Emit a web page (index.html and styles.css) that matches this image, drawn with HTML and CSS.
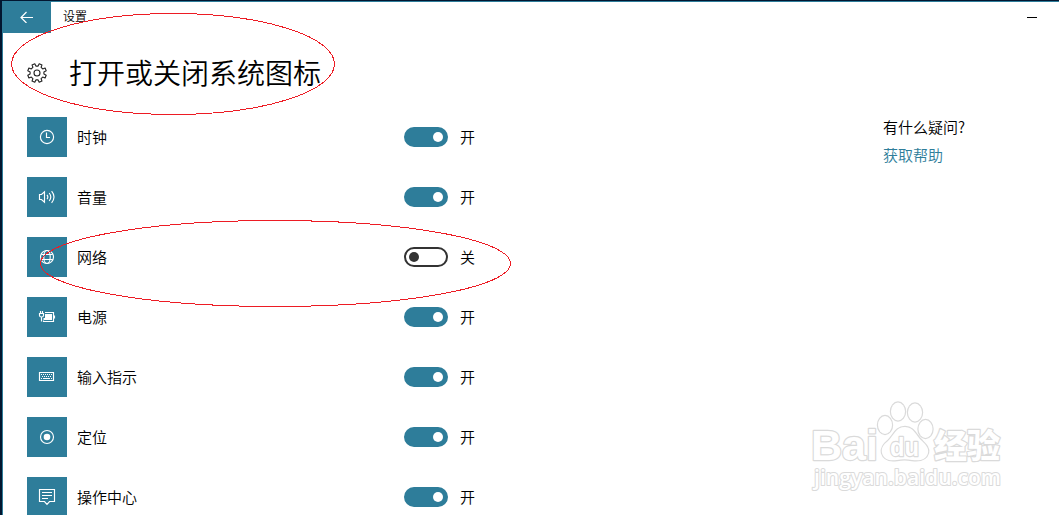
FILE: index.html
```html
<!DOCTYPE html>
<html lang="zh-CN">
<head>
  <meta charset="UTF-8">
  <title>设置</title>
  <link rel="stylesheet" href="styles.css">
</head>
<body>
  <div class="window">
    <header class="titlebar">
      <button class="back" aria-label="返回">
        <svg width="14" height="12" viewBox="0 0 14 12"><path d="M13 6.500H1.500M6.500 1L1 6.500l5.500 5.500"/></svg>
      </button>
      <span class="title">设置</span>
      <button class="minimize" aria-label="最小化"></button>
    </header>

    <div class="heading">
      <svg class="gear" width="20" height="20" viewBox="-10 -10 20 20">
        <path d="M6.9-1.1V1.1L9.2 2.2 8.1 5 5.7 4.1 4.1 5.7 5 8.1 2.2 9.2 1.1 6.9H-1.1L-2.2 9.2-5 8.1-4.1 5.7-5.7 4.1-8.1 5-9.2 2.2-6.9 1.1V-1.1L-9.2-2.2-8.1-5-5.7-4.1-4.1-5.7-5-8.1-2.2-9.2-1.1-6.9H1.1L2.2-9.2 5-8.1 4.1-5.7 5.7-4.1 8.1-5 9.2-2.2z"/>
        <circle r="3"/>
      </svg>
      <h1>打开或关闭系统图标</h1>
    </div>

    <main class="content">
      <ul class="settings">
        <li class="row">
          <span class="icon"><svg width="20" height="20" viewBox="0 0 20 20"><circle cx="10" cy="10" r="6.6"/><path d="M9.5 5.5v5h3.5"/></svg></span>
          <span class="name">时钟</span>
          <span class="toggle on"></span>
          <span class="state">开</span>
        </li>
        <li class="row">
          <span class="icon"><svg width="20" height="20" viewBox="0 0 20 20"><path d="M2.5 7.5h2l3-2.7v10.4l-3-2.7h-2zM10 7.8q1.7 2.2 0 4.4M12.2 6q3.2 4 0 8M14.6 4.2q4.8 5.8 0 11.6"/></svg></span>
          <span class="name">音量</span>
          <span class="toggle on"></span>
          <span class="state">开</span>
        </li>
        <li class="row">
          <span class="icon"><svg width="20" height="20" viewBox="0 0 20 20"><circle cx="10" cy="10" r="6.5"/><ellipse cx="10" cy="10" rx="3.2" ry="6.5"/><path d="M4.3 7.5h11.4M4.3 12.5h11.4"/></svg></span>
          <span class="name">网络</span>
          <span class="toggle"></span>
          <span class="state">关</span>
        </li>
        <li class="row">
          <span class="icon"><svg width="20" height="20" viewBox="0 0 20 20"><path d="M3.5 4v2.500M5.500 4v2.500M2.500 6.500h4v2q0 1.500-2 1.500t-2-1.500zM4.500 10v4.500M8 5.500h8.500v9h-10v-1M17.500 8.500v3"/><path class="solid" d="M8 7h7v6H6.500v-2H8z"/></svg></span>
          <span class="name">电源</span>
          <span class="toggle on"></span>
          <span class="state">开</span>
        </li>
        <li class="row">
          <span class="icon"><svg width="20" height="20" viewBox="0 0 20 20"><path d="M2.500 5.500h14v8h-14z"/><path d="M4 7.500h11M5 9.500h10" stroke-dasharray="1 1"/><path d="M4 11.500h1M6 11.500h7M14 11.500h1"/></svg></span>
          <span class="name">输入指示</span>
          <span class="toggle on"></span>
          <span class="state">开</span>
        </li>
        <li class="row">
          <span class="icon"><svg width="20" height="20" viewBox="0 0 20 20"><circle cx="10" cy="10" r="6.500"/><circle class="solid" cx="10" cy="10" r="3.300"/></svg></span>
          <span class="name">定位</span>
          <span class="toggle on"></span>
          <span class="state">开</span>
        </li>
        <li class="row">
          <span class="icon"><svg width="20" height="20" viewBox="0 0 20 20"><path d="M2.500 2.500h15v12h-5l-2.500 2.800-2.500-2.800h-5zM5 5.500h10M5 8.500h10M5 11.500h6"/></svg></span>
          <span class="name">操作中心</span>
          <span class="toggle on"></span>
          <span class="state">开</span>
        </li>
      </ul>

      <aside class="help">
        <p>有什么疑问?</p>
        <a href="#">获取帮助</a>
      </aside>
    </main>
  </div>

  <svg class="marks" width="520" height="320" viewBox="0 0 520 320">
    <ellipse cx="173" cy="64" rx="161.500" ry="50.500"/>
    <ellipse cx="275.500" cy="263.500" rx="235" ry="43"/>
  </svg>

  <svg class="watermark" width="210" height="110" viewBox="800 390 210 110">
    <text class="latin" x="811" y="460" font-size="42" textLength="67" lengthAdjust="spacingAndGlyphs">Bai</text>
    <ellipse cx="885" cy="425" rx="7" ry="9"/>
    <ellipse cx="898" cy="411.500" rx="7" ry="9"/>
    <ellipse cx="915" cy="412.500" rx="7" ry="9"/>
    <ellipse cx="925.500" cy="429" rx="7" ry="9"/>
    <path d="M905 427c-9 0-11 8-17 14-5 4-7 7-6 12 2 7 8 8 15 7 5-1 10-1 15 0 8 1 14 0 16-7 1-5-2-8-6-12-6-5-8-14-17-14z"/>
    <text class="latin" x="890" y="456" font-size="25" textLength="29" lengthAdjust="spacingAndGlyphs">du</text>
    <text class="cjk" x="934" y="458" font-size="33">经验</text>
    <text class="url" x="814" y="485" font-size="21" textLength="187" lengthAdjust="spacingAndGlyphs">jingyan.baidu.com</text>
  </svg>
</body>
</html>
```
FILE: styles.css
```css
* {
  box-sizing: border-box;
}

body {
  margin: 0;
  height: 515px;
  overflow: hidden;
  padding: 1px 0 0 2px;
  background: #021630;
  color: #000;
  font-family: "Noto Sans CJK SC", sans-serif;
  font-weight: 350;
  font-size: 15px;
}

.window {
  height: 514px;
  overflow: hidden;
  background: #fff;
  border-top: 1px solid #2e7d9a;
  border-left: 1px solid #2e7d9a;
}

.titlebar {
  display: flex;
  height: 31px;
}

.back {
  display: flex;
  align-items: center;
  justify-content: center;
  width: 48px;
  padding: 0 0 2px;
  border: none;
  background: #2e7d9a;
}

svg {
  fill: none;
}

.back svg {
  stroke: #fff;
  stroke-width: 1.2;
}

.title {
  margin-left: 12px;
  font-size: 12px;
  line-height: 28px;
}

.minimize {
  width: 10px;
  height: 1px;
  margin: 15px 22px 0 auto;
  padding: 0;
  border: none;
  background: #000;
}

.heading {
  display: flex;
  align-items: center;
  gap: 22px;
  height: 80px;
  padding-left: 24px;
}

.gear {
  stroke: #222;
  stroke-width: 1.1;
  stroke-linejoin: round;
}

h1 {
  margin: 0;
  padding-bottom: 2px;
  font-size: 28px;
  font-weight: 350;
  line-height: 40px;
}

.content {
  display: flex;
  padding: 4px 0 0 24px;
}

.settings {
  display: flex;
  flex-direction: column;
  gap: 20px;
  width: 856px;
  margin: 0;
  padding: 0;
  list-style: none;
}

.row {
  display: flex;
  align-items: center;
  height: 40px;
}

.icon {
  display: flex;
  align-items: center;
  justify-content: center;
  width: 40px;
  height: 40px;
  background: #2e7d9a;
}

.icon svg {
  stroke: #fff;
  stroke-width: 1.15;
}

.icon .solid {
  fill: #fff;
  stroke: none;
}

.name {
  width: 337px;
  padding: 0 0 2px 10px;
}

.toggle {
  display: flex;
  align-items: center;
  width: 44px;
  height: 20px;
  padding: 0 3px;
  border: 2px solid #333;
  border-radius: 10px;
}

.toggle::before {
  content: "";
  width: 10px;
  height: 10px;
  border-radius: 50%;
  background: #333;
}

.toggle.on {
  justify-content: flex-end;
  border-color: #2e7d9a;
  background: #2e7d9a;
}

.toggle.on::before {
  background: #fff;
}

.state {
  margin-left: 12px;
  padding-bottom: 2px;
}

.help {
  margin-top: -1px;
  line-height: 22px;
}

.help p {
  margin: 0 0 6px;
}

.help a {
  color: #2e7d9a;
  text-decoration: none;
}

/* red pen circles */
.marks {
  position: absolute;
  left: 0;
  top: 0;
  stroke: #ed1c24;
  stroke-width: 1;
  shape-rendering: crispEdges;
  pointer-events: none;
}

/* gray outline goes behind the white fill */
.watermark {
  position: absolute;
  left: 800px;
  top: 390px;
  fill: #fff;
  stroke: #dadada;
  stroke-width: 2.4;
  stroke-linejoin: round;
  paint-order: stroke;
  pointer-events: none;
}

.latin {
  font-family: "Liberation Sans", sans-serif;
  font-weight: bold;
}

.cjk {
  font-weight: 900;
}

.url {
  font-family: "Open Sans", sans-serif;
  font-weight: 600;
  stroke-width: 2;
}
```
